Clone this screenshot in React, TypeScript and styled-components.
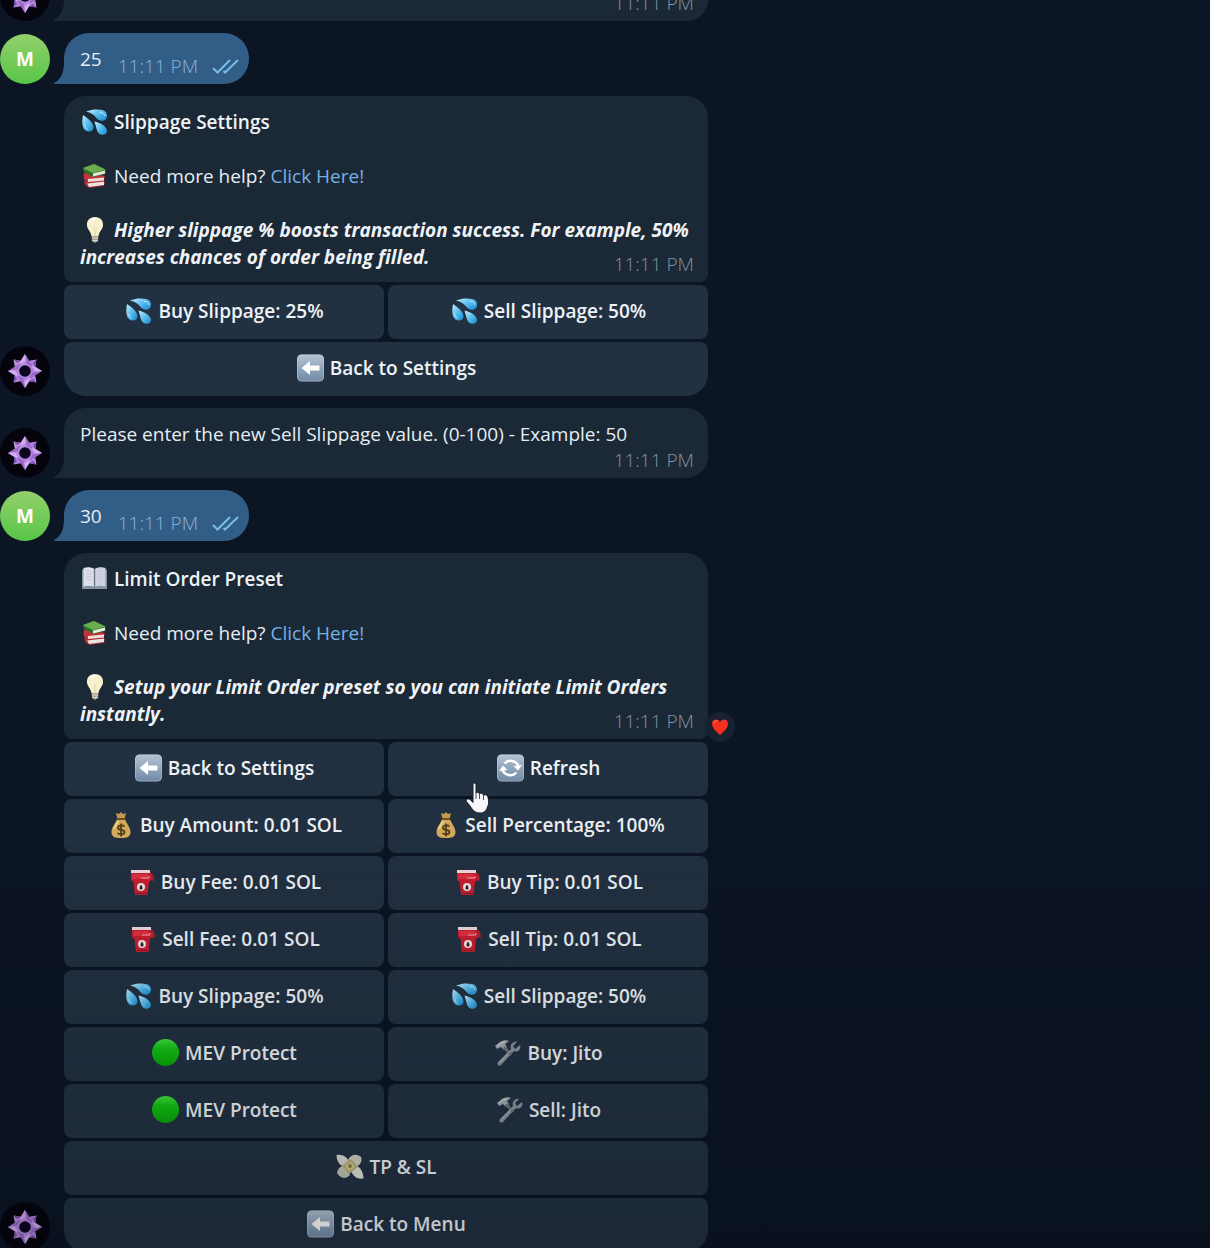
import React from 'react';
import styled, { createGlobalStyle, css } from 'styled-components';

const colors = {
  page: '#0c1524',
  bubble: '#1b2937',
  own: '#315d87',
  key: '#223142',
  text: '#e6edf3',
  strong: '#eef3f7',
  link: '#76b0e4',
  time: '#8491a0',
  ownTime: '#8db2d6',
};

const GlobalStyle = createGlobalStyle`
  *, *::before, *::after { box-sizing: border-box; }
  html { background: ${colors.page}; scrollbar-width: none; }
  body {
    margin: 0;
    color: ${colors.text};
    font-family: 'Open Sans', 'Noto Sans', sans-serif;
    font-size: 19px;
    line-height: 27px;
  }
  p, h2 { margin: 0; font-size: inherit; }
`;

const Page = styled.main`
  position: relative;
  height: 100vh;
  overflow-x: hidden;
  overflow-y: auto;
  scrollbar-width: none;
  background: ${colors.page};
`;

const Dimmer = styled.div`
  position: fixed;
  inset: 0;
  pointer-events: none;
  background: linear-gradient(180deg, rgba(2, 6, 12, 0) 62%, rgba(2, 6, 12, 0.2) 100%);
`;

const Thread = styled.div`
  display: flex;
  flex-direction: column;
  gap: 12px;
  width: 100%;
  max-width: 708px;
`;

const Row = styled.article<{ $cut?: boolean }>`
  display: flex;
  align-items: flex-end;
  gap: 14px;
  ${(p) => p.$cut && css`height: 21px;`}
`;

const AvatarSlot = styled.div`
  flex: none;
  width: 50px;
  height: 50px;
`;

const UserAvatar = styled.div`
  display: grid;
  place-items: center;
  width: 50px;
  height: 50px;
  border-radius: 50%;
  background: linear-gradient(180deg, #93d06b, #58c548);
  color: #fff;
  font-weight: 700;
`;

const Column = styled.div`
  display: flex;
  flex: 1;
  flex-direction: column;
  gap: 3px;
  min-width: 0;
`;

const Bubble = styled.div<{ $keyboard?: boolean; $cut?: boolean }>`
  position: relative;
  display: flex;
  flex-direction: column;
  justify-content: flex-end;
  padding: 13px 14px 6px 16px;
  border-radius: ${(p) => (p.$keyboard ? '22px 22px 8px 8px' : '22px 22px 22px 0')};
  background: ${colors.bubble};
  ${(p) => p.$cut && css`
    height: 21px;
    padding-top: 0;
    border-radius: 0 0 22px 0;
  `}
`;

const OwnBubble = styled.div`
  position: relative;
  display: flex;
  align-items: flex-end;
  padding: 13px 9px 6px 16px;
  border-radius: 25px 25px 25px 0;
  background: ${colors.own};
`;

const OwnText = styled.p`
  padding-bottom: 5px;
  margin-right: 16px;
`;

const Time = styled.time<{ $own?: boolean; $overlap?: boolean }>`
  align-self: flex-end;
  margin-top: ${(p) => (p.$overlap ? '-19px' : '0')};
  color: ${(p) => (p.$own ? colors.ownTime : colors.time)};
  font-weight: 300;
  line-height: 24px;
`;

const Blank = styled.div`
  height: 27px;
`;

const Title = styled.h2`
  font-weight: 600;
  color: ${colors.strong};
`;

const Tip = styled.p`
  font-style: italic;
  font-weight: 700;
  color: ${colors.strong};
`;

const Link = styled.a`
  color: ${colors.link};
  text-decoration: none;
`;

const EmojiBox = styled.svg`
  width: 29px;
  height: 28px;
  margin: -2px 5px -2px 0;
  vertical-align: -5px;
`;

const Keyboard = styled.div`
  display: grid;
  grid-template-columns: 1fr 1fr;
  gap: 3px 4px;
`;

const Key = styled.button<{ $wide?: boolean; $last?: boolean }>`
  position: relative;
  height: 54px;
  padding: 0 8px 2px;
  border: 0;
  border-radius: ${(p) => (p.$last ? '8px 8px 22px 22px' : '8px')};
  background: ${colors.key};
  color: ${colors.strong};
  font: inherit;
  font-weight: 600;
  cursor: pointer;
  ${(p) => p.$wide && css`grid-column: 1 / -1;`}
`;

const TailShape = styled.svg`
  position: absolute;
  left: -10px;
  bottom: 0;
  width: 10px;
  height: 22px;
`;

const Checks = styled.svg`
  width: 28px;
  height: 18px;
  margin: 0 0 3px 14px;
`;

const Reaction = styled.span`
  position: absolute;
  right: -27px;
  bottom: -3px;
  display: grid;
  place-items: center;
  width: 30px;
  height: 30px;
  border-radius: 50%;
  background: #172130;
`;

const HandShape = styled.svg`
  position: absolute;
  left: 77px;
  top: 39px;
  width: 26px;
  height: 34px;
  z-index: 1;
`;

const Tail = ({ own }: { own?: boolean }) => (
  <TailShape viewBox="0 0 10 22" aria-hidden="true">
    <path d="M10 0V22H0.500C-0.500 22 0 21 1 20.500C7 17 10 10 10 0Z" fill={own ? colors.own : colors.bubble} />
  </TailShape>
);

const BotAvatar = () => (
  <svg width="50" height="50" viewBox="0 0 50 50" role="img" aria-label="Bot">
    <defs>
      <linearGradient id="star" x1="0" y1="0" x2="1" y2="1">
        <stop offset="0" stopColor="#cf9fee" />
        <stop offset="0.5" stopColor="#b283de" />
        <stop offset="1" stopColor="#b88be6" />
      </linearGradient>
    </defs>
    <circle cx="25" cy="25" r="25" fill="#05040d" />
    <path
      d="M25 8L29.200 14.800L36.500 13.500L35.200 20.800L42 25L35.200 29.200L36.500 36.500L29.200 35.200L25 42L20.800 35.200L13.500 36.500L14.800 29.200L8 25L14.800 20.800L13.500 13.500L20.800 14.800Z"
      fill="url(#star)"
    />
    {[0, 90, 180, 270].map((a) => (
      <g key={a} transform={`rotate(${a} 25 25)`}>
        <path d="M13.500 13.500L20.800 14.800L17 17Z" fill="#7c4fae" />
        <path d="M25 8L29.200 14.800L33 21L26.500 17.500Z" fill="#8656b8" opacity="0.6" />
        <path d="M20.800 14.800L25 8L25.500 15L20 18.500Z" fill="#e0baf6" opacity="0.7" />
      </g>
    ))}
    <circle cx="25" cy="25" r="5.800" fill="#0c0720" />
  </svg>
);

const Drops = () => (
  <>
    <defs>
      <linearGradient id="water" x1="0" y1="0" x2="1" y2="1">
        <stop offset="0" stopColor="#c9efff" />
        <stop offset="0.45" stopColor="#62c2f0" />
        <stop offset="1" stopColor="#1788cf" />
      </linearGradient>
    </defs>
    <path d="M6 3.500C12 1 18 1 22 2C27.500 3 28 8 26 11C23.500 14 19 13 16.500 10C14 7 11 4.500 6 3.500Z" fill="url(#water)" />
    <path d="M3 7C7.500 10 13.500 14.500 13.500 19.500C13.500 23.500 8.500 24.500 5.500 22.500C1.500 19.500 2 13 3 7Z" fill="url(#water)" />
    <path d="M14.500 13.500C19.500 14.500 26 17.500 27 22.500C27 27 22 28 19 25.500C16.500 23 16 18 14.500 13.500Z" fill="url(#water)" />
    <path d="M20 4.500C23 4.500 25 6 24.500 8M5 17C5 19.500 6 20.500 7.500 21" stroke="#d8f5ff" strokeWidth="1" fill="none" opacity="0.8" />
  </>
);

const Books = () => (
  <>
    <path d="M4 19L22 17.500L25 20L24 24L9 26L5 23Z" fill="#a9282f" />
    <path d="M7 21.500L24 19.500V23L9 25Z" fill="#e9e4e1" />
    <path d="M3.500 12L6 10L25 14L23.500 19L7 20.500L4 17Z" fill="#c2343a" />
    <path d="M8 17L24 15.500V18.500L8 20Z" fill="#f0dedb" />
    <path d="M3 6L14 2L25.500 7.500V12L13 15L4 10Z" fill="#36762f" />
    <path d="M3 6L14 2L25.500 7.500L13 11Z" fill="#69ad4e" />
    <path d="M13 11.500L25 8.500V11.500L13 14.500Z" fill="#e7ebdd" />
    <path d="M13 12L4 8V10L13 14Z" fill="#2e6a2b" />
  </>
);

const Bulb = () => (
  <>
    <path d="M15 1C9.500 1 6.500 5 7 9.500C7.500 13.500 10.500 15 11.500 20H18.500C19.500 15 22.500 13.500 23 9.500C23.500 5 20.500 1 15 1Z" fill="#f7f1cd" />
    <path d="M14 11L14.500 20H15.500L16 11" stroke="#e9dfb0" strokeWidth="1" fill="none" />
    <path d="M11 5C12 3.500 13.500 3 15.500 3" stroke="#fff" strokeWidth="2" fill="none" />
    <path d="M11.500 20H18.500L18 25L15 27L12 25Z" fill="#a6a394" />
    <path d="M12 22H18M12 24.500H18" stroke="#e0dccb" strokeWidth="1" />
  </>
);

const OpenBook = () => (
  <>
    <path d="M2 5L4 4H25L27 5V24H2Z" fill="#8394a4" />
    <path d="M3.500 3C7 1.500 11.500 2 14.500 4V22C11 20.500 7 20.500 3.500 21.500Z" fill="#dfe1e9" />
    <path d="M25.500 3C22 1.500 17.500 2 14.500 4V22C18 20.500 22 20.500 25.500 21.500Z" fill="#cfd3df" />
    <path d="M14.500 4V22.500" stroke="#727b88" strokeWidth="1.500" />
    <path d="M6 6H12M6 9H12M6 12H12M6 15H12M17 6H23M17 9H23M17 12H23M17 15H23" stroke="#c3c7d3" strokeWidth="1" />
  </>
);

const Tile = ({ children }: { children: React.ReactNode }) => (
  <>
    <defs>
      <linearGradient id="tile" x1="0" y1="0" x2="0" y2="1">
        <stop offset="0" stopColor="#b4c4d4" />
        <stop offset="1" stopColor="#7089a5" />
      </linearGradient>
    </defs>
    <rect x="1" y="0.500" width="27" height="27" rx="4.500" fill="url(#tile)" />
    <rect x="1.500" y="1" width="26" height="26" rx="4" fill="none" stroke="#c5d2de" strokeWidth="1" opacity="0.4" />
    {children}
  </>
);

const Back = () => (
  <Tile>
    <path d="M5.500 14L14 7V11.500H23.500V16.500H14V21Z" fill="#fff" />
  </Tile>
);

const Refresh = () => (
  <Tile>
    <g fill="none" stroke="#fff" strokeWidth="2.500">
      <path d="M8.500 9.500A8.500 8.500 0 0 1 22.500 12" />
      <path d="M20.500 18.500A8.500 8.500 0 0 1 6.500 16" />
    </g>
    <path d="M26 11L22 16.500L17.500 12ZM3 17L7 11.500L11.500 16Z" fill="#fff" />
  </Tile>
);

const Bag = () => (
  <>
    <path d="M10 2L13 3L15 1L17 3L20 2L18.500 8H11.500Z" fill="#c89c4d" />
    <path d="M11 8H19C20 12 24.500 16 24.500 21C24.500 26 21 27 15 27C9 27 5.500 26 5.500 21C5.500 16 10 12 11 8Z" fill="#d6ae5c" />
    <path d="M11 8H19" stroke="#765024" strokeWidth="2" />
    <path d="M8 18C9 15 11 13 12 10" stroke="#f2d58c" strokeWidth="2" fill="none" />
    <path d="M18.500 15.500C17 13.500 11.500 14 12 17C12.500 20 18.500 18 18.500 21C18.500 24 13 24 11.500 22M15 12.500V25.500" stroke="#56401d" strokeWidth="1.800" fill="none" />
  </>
);

const FuelPump = () => (
  <>
    <path d="M4 4H23L26 7V11L22 14L20.500 27H8L6.500 14L4 12Z" fill="#c91f31" />
    <path d="M4 2H23V5H4Z" fill="#f0dce0" />
    <path d="M5 6H21V11H5Z" fill="#df3042" />
    <path d="M14 10H22V8" stroke="#f1a4ac" strokeWidth="1" fill="none" />
    <path d="M22 6L26 9V13" stroke="#a92332" strokeWidth="1.500" fill="none" />
    <circle cx="14" cy="19" r="4" fill="#f5e5e7" />
    <path d="M14 16.500C15 18 15.500 19 15.500 20C15.500 21 15 21.500 14 21.500C13 21.500 12.500 21 12.500 20C12.500 19 13 18 14 16.500Z" fill="#342126" />
    <path d="M9 25.500H20" stroke="#8a1927" strokeWidth="1" />
  </>
);

const GreenDot = () => (
  <>
    <defs>
      <linearGradient id="green" x1="0" y1="0" x2="0" y2="1">
        <stop offset="0" stopColor="#45df42" />
        <stop offset="0.35" stopColor="#14c413" />
        <stop offset="1" stopColor="#08a508" />
      </linearGradient>
    </defs>
    <circle cx="14.500" cy="13.500" r="13.500" fill="url(#green)" />
  </>
);

const Tools = () => (
  <>
    <path d="M24 3L20 7L22 10L27 6C28.500 10 25 14 21 12L8 26C6 28 3 25 5 23L18 10C16.500 6 20 2 24 3Z" fill="#8b9298" />
    <path d="M2 7L7 3C10 1 14 1 16 2L12 5L14 8L11 11L8 8L4 10Z" fill="#a3a9ae" />
    <path d="M11 8L18 16" stroke="#6d747b" strokeWidth="3" />
    <path d="M4 7L8 4L12 3" stroke="#d5d8da" strokeWidth="1" fill="none" />
    <path d="M7 23L17 12.500" stroke="#b9bec2" strokeWidth="1" />
  </>
);

const WingedMoney = () => (
  <>
    <path d="M1.500 2C8 1 13 4 14 10L9 14C4 12 1.500 7 1.500 2Z" fill="#dcdcd0" />
    <path d="M13 7C15 2 21 0 26 4C28 9 24 14 18 14Z" fill="#cfcfc2" />
    <path d="M2 20C3 14 8 11 13 13L15 22C10 27 5 25 2 20Z" fill="#c2c4b6" />
    <path d="M16 13C22 11 28 15 28.500 25.500C22 26.500 17 23 15 15Z" fill="#e1e1d6" />
    <path d="M7 12.500L16 6L23 14L14 21Z" fill="#b9ae7d" />
    <path d="M10 12.500L16 8.500L20 14L14 18Z" fill="#d6ca90" />
    <circle cx="15" cy="13" r="2" fill="#8b8050" />
  </>
);

const pictures = {
  drops: Drops,
  books: Books,
  bulb: Bulb,
  openBook: OpenBook,
  back: Back,
  refresh: Refresh,
  bag: Bag,
  fuel: FuelPump,
  green: GreenDot,
  tools: Tools,
  money: WingedMoney,
};

type PictureName = keyof typeof pictures;

const Emoji = ({ name }: { name: PictureName }) => {
  const Picture = pictures[name];
  return (
    <EmojiBox viewBox="0 0 29 28" aria-hidden="true">
      <Picture />
    </EmojiBox>
  );
};

const Heart = () => (
  <svg width="18" height="18" viewBox="0 0 18 18" role="img" aria-label="Heart">
    <path d="M9 17C5 13.500 1 10 1 5.500C1 1 7 0 9 4C11 0 17 1 17 5.500C17 10 13 13.500 9 17Z" fill="#f3301f" />
    <path d="M3 5C3.500 3 5 2.500 6.500 3" stroke="#ff8170" strokeWidth="1" fill="none" />
  </svg>
);

const Hand = () => (
  <HandShape viewBox="0 0 26 34" aria-hidden="true">
    <path
      d="M9 2C10.500 2 11 3 11 4.500V12C12 10.500 14 11 14.500 13C15.500 11.500 18 12 18.500 14.500C20 13 22.500 14 23 16.500C24 20 24 23 22.500 26C21 30 19 32 15 32C10 32 7.500 29 5.500 25.500L1.500 20.500C0.500 18.500 3 17 5 18.500L8 21.500V4C8 3 8 2 9 2Z"
      fill="#f8f8fa"
      stroke="#17202b"
      strokeWidth="1"
    />
    <path d="M11 12V18M14.500 13V18M18.500 14.500V19" stroke="#47515d" strokeWidth="1" />
  </HandShape>
);

interface KeySpec {
  icon: PictureName;
  label: string;
  wide?: boolean;
  pointed?: boolean;
}

const KeyGrid = ({ keys }: { keys: KeySpec[] }) => (
  <Keyboard>
    {keys.map((k, i) => (
      <Key key={i} type="button" $wide={k.wide} $last={i === keys.length - 1}>
        <Emoji name={k.icon} />
        {k.label}
        {k.pointed && <Hand />}
      </Key>
    ))}
  </Keyboard>
);

const Own = ({ text }: { text: string }) => (
  <Row>
    <AvatarSlot>
      <UserAvatar>M</UserAvatar>
    </AvatarSlot>
    <OwnBubble>
      <Tail own />
      <OwnText>{text}</OwnText>
      <Time $own>11:11 PM</Time>
      <Checks viewBox="0 0 28 18" role="img" aria-label="Read">
        <path d="M1 11L5.500 15.500L18 3M11.500 14L13 15.500L26 3" fill="none" stroke="#78bdec" strokeWidth="2" />
      </Checks>
    </OwnBubble>
  </Row>
);

interface CardProps {
  icon: PictureName;
  title: string;
  tip: string;
  keys: KeySpec[];
  liked?: boolean;
}

const Card = ({ icon, title, tip, keys, liked }: CardProps) => (
  <Row>
    <AvatarSlot>
      <BotAvatar />
    </AvatarSlot>
    <Column>
      <Bubble $keyboard>
        <Title>
          <Emoji name={icon} />
          {title}
        </Title>
        <Blank />
        <p>
          <Emoji name="books" />
          Need more help? <Link href="#help">Click Here!</Link>
        </p>
        <Blank />
        <Tip>
          <Emoji name="bulb" />
          {tip}
        </Tip>
        <Time $overlap>11:11 PM</Time>
        {liked && (
          <Reaction>
            <Heart />
          </Reaction>
        )}
      </Bubble>
      <KeyGrid keys={keys} />
    </Column>
  </Row>
);

const slippageKeys: KeySpec[] = [
  { icon: 'drops', label: 'Buy Slippage: 25%' },
  { icon: 'drops', label: 'Sell Slippage: 50%' },
  { icon: 'back', label: 'Back to Settings', wide: true },
];

const limitKeys: KeySpec[] = [
  { icon: 'back', label: 'Back to Settings' },
  { icon: 'refresh', label: 'Refresh', pointed: true },
  { icon: 'bag', label: 'Buy Amount: 0.01 SOL' },
  { icon: 'bag', label: 'Sell Percentage: 100%' },
  { icon: 'fuel', label: 'Buy Fee: 0.01 SOL' },
  { icon: 'fuel', label: 'Buy Tip: 0.01 SOL' },
  { icon: 'fuel', label: 'Sell Fee: 0.01 SOL' },
  { icon: 'fuel', label: 'Sell Tip: 0.01 SOL' },
  { icon: 'drops', label: 'Buy Slippage: 50%' },
  { icon: 'drops', label: 'Sell Slippage: 50%' },
  { icon: 'green', label: 'MEV Protect' },
  { icon: 'tools', label: 'Buy: Jito' },
  { icon: 'green', label: 'MEV Protect' },
  { icon: 'tools', label: 'Sell: Jito' },
  { icon: 'money', label: 'TP & SL', wide: true },
  { icon: 'back', label: 'Back to Menu', wide: true },
];

export default function App() {
  return (
    <Page>
      <GlobalStyle />
      <Thread>
        <Row $cut>
          <AvatarSlot>
            <BotAvatar />
          </AvatarSlot>
          <Column>
            <Bubble $cut>
              <Tail />
              <Time>11:11 PM</Time>
            </Bubble>
          </Column>
        </Row>
        <Own text="25" />
        <Card
          icon="drops"
          title="Slippage Settings"
          tip="Higher slippage % boosts transaction success. For example, 50% increases chances of order being filled."
          keys={slippageKeys}
        />
        <Row>
          <AvatarSlot>
            <BotAvatar />
          </AvatarSlot>
          <Column>
            <Bubble>
              <Tail />
              <p>Please enter the new Sell Slippage value. (0-100) - Example: 50</p>
              <Time>11:11 PM</Time>
            </Bubble>
          </Column>
        </Row>
        <Own text="30" />
        <Card
          icon="openBook"
          title="Limit Order Preset"
          tip="Setup your Limit Order preset so you can initiate Limit Orders instantly."
          keys={limitKeys}
          liked
        />
      </Thread>
      <Dimmer />
    </Page>
  );
}
